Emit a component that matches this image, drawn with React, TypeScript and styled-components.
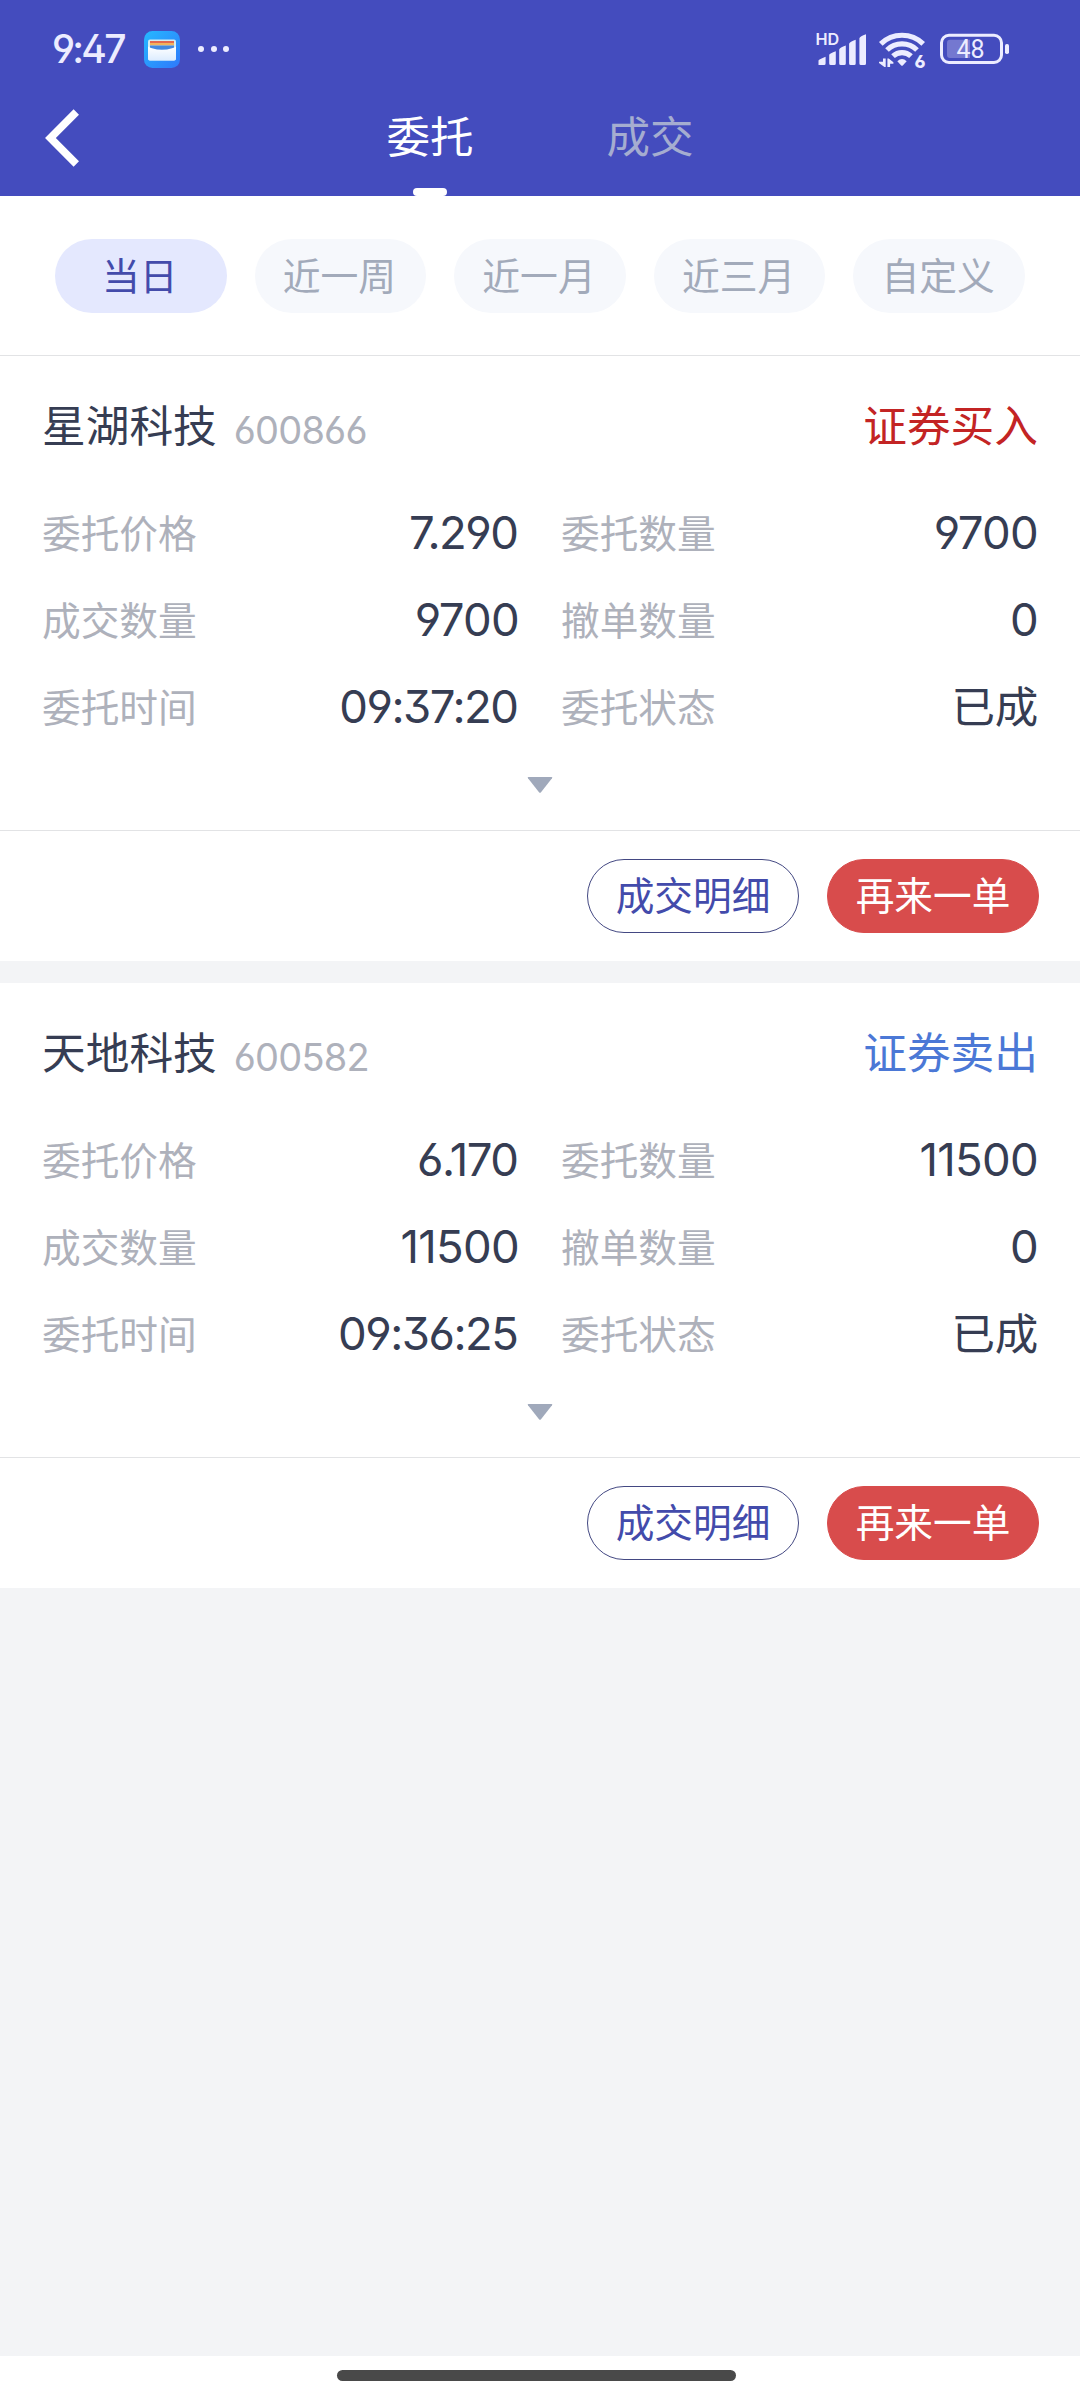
import React from 'react';
import styled, { createGlobalStyle } from 'styled-components';

const GlobalStyle = createGlobalStyle`
  * { box-sizing: border-box; }
  body {
    margin: 0;
    background: #f3f4f6;
    font-family: Inter, 'Noto Sans CJK SC', sans-serif;
    font-feature-settings: 'ss01' 1;
  }
  button {
    font: inherit;
    font-feature-settings: inherit;
    border: 0;
    padding: 0;
    background: none;
  }
`;

const Screen = styled.div`
  display: flex;
  flex-direction: column;
  width: 1080px;
  height: 2400px;
  overflow: hidden;
  background: #f3f4f6;
`;

const Header = styled.header`
  height: 196px;
  background: #444cbe;
`;

const StatusBar = styled.div`
  display: flex;
  align-items: center;
  height: 98px;
  padding: 0 70px 0 52px;
  color: #ececff;
`;

const Clock = styled.span`
  width: 92px;
  font-size: 39px;
  line-height: 40px;
  font-weight: 500;
  letter-spacing: -2.8px;
`;

const StatusIcons = styled.svg`
  display: block;
  margin-left: auto;
`;

const NavBar = styled.nav`
  display: grid;
  grid-template-columns: 320px 220px 220px 320px;
  height: 98px;
`;

const BackButton = styled.button`
  display: flex;
  align-items: flex-start;
  padding: 11px 0 0 45px;
`;

const Tab = styled.button<{ $active?: boolean }>`
  display: flex;
  flex-direction: column;
  align-items: center;
  justify-content: space-between;
  font-size: 43.5px;
  line-height: 79px;
  color: ${(p) => (p.$active ? '#ffffff' : '#a5add0')};
  &::after {
    content: '';
    width: 34px;
    height: 8px;
    border-radius: 4px;
    background: ${(p) => (p.$active ? '#ffffff' : 'transparent')};
  }
`;

const Filters = styled.div`
  display: flex;
  gap: 28px;
  height: 160px;
  padding: 43px 55px 42px;
  background: #fff;
  border-bottom: 1px solid #e2e3e5;
`;

const Chip = styled.button<{ $active?: boolean }>`
  flex: 1;
  height: 74px;
  padding-right: 2px;
  border-radius: 37px;
  font-size: 37.8px;
  line-height: 71px;
  color: ${(p) => (p.$active ? '#434bab' : '#a2aaba')};
  background: ${(p) => (p.$active ? '#e4e8fe' : '#f6f8fc')};
`;

const Orders = styled.main`
  display: flex;
  flex-direction: column;
  gap: 22px;
  flex: 1;
`;

const Card = styled.article`
  height: 605px;
  background: #fff;
`;

const CardBody = styled.div`
  height: 475px;
  padding: 37px 42px 0;
  border-bottom: 1px solid #e2e3e5;
`;

const CardTitle = styled.div`
  display: flex;
  height: 64px;
  line-height: 68px;
`;

const StockName = styled.span`
  font-size: 43.7px;
  color: #363d53;
`;

const StockCode = styled.span`
  margin-left: 17px;
  font-size: 38px;
  line-height: 74px;
  letter-spacing: -0.8px;
  color: #aeb1bb;
`;

const Side = styled.span<{ $buy: boolean }>`
  margin-left: auto;
  font-size: 43.7px;
  color: ${(p) => (p.$buy ? '#c32424' : '#4b78d6')};
`;

const Fields = styled.dl`
  display: grid;
  grid-template-columns: 1fr 1fr;
  column-gap: 42px;
  grid-auto-rows: 87px;
  margin: 33px 0 0;
`;

const Field = styled.div`
  display: flex;
  align-items: center;
  justify-content: space-between;
`;

const FieldLabel = styled.dt`
  font-size: 38.7px;
  line-height: 60px;
  color: #aeb1bb;
`;

const FieldValue = styled.dd<{ $tight?: boolean }>`
  margin: 0;
  padding: 0 ${(p) => (p.$tight ? 1.5 : 0)}px 2px 0;
  font-size: 45.5px;
  line-height: 58px;
  letter-spacing: ${(p) => (p.$tight ? -1.5 : -0.7)}px;
  color: #363d53;
`;

const StatusValue = styled(FieldValue)`
  font-size: 43.5px;
  letter-spacing: -0.2px;
`;

const Expand = styled.div`
  display: flex;
  justify-content: center;
  padding-top: 25px;
`;

const Actions = styled.div`
  display: flex;
  justify-content: flex-end;
  gap: 28px;
  padding: 28px 41px 0 0;
`;

const ActionButton = styled.button<{ $primary?: boolean }>`
  width: 212px;
  height: 74px;
  border-radius: 37px;
  font-size: 38.7px;
  line-height: 70px;
  border: 1px solid ${(p) => (p.$primary ? '#d84c4c' : '#434882')};
  color: ${(p) => (p.$primary ? '#ffffff' : '#434bab')};
  background: ${(p) => (p.$primary ? '#d84c4c' : '#ffffff')};
`;

const HomeBar = styled.footer`
  display: flex;
  justify-content: center;
  height: 44px;
  padding: 14px 7px 0 0;
  background: #fff;
  &::after {
    content: '';
    width: 399px;
    height: 10.5px;
    border-radius: 6px;
    background: #494949;
  }
`;

interface Order {
  name: string;
  code: string;
  side: string;
  buy: boolean;
  price: string;
  qty: string;
  filled: string;
  cancelled: string;
  time: string;
  status: string;
}

const orders: Order[] = [
  { name: '星湖科技', code: '600866', side: '证券买入', buy: true, price: '7.290', qty: '9700', filled: '9700', cancelled: '0', time: '09:37:20', status: '已成' },
  { name: '天地科技', code: '600582', side: '证券卖出', buy: false, price: '6.170', qty: '11500', filled: '11500', cancelled: '0', time: '09:36:25', status: '已成' },
];

const filters = ['当日', '近一周', '近一月', '近三月', '自定义'];

const WalletIcon = () => (
  <svg width="36" height="37" viewBox="0 0 36 37">
    <defs>
      <linearGradient id="walletBg" x1="0" y1="0" x2="1" y2="1">
        <stop offset="0" stopColor="#25b8ff" />
        <stop offset="1" stopColor="#2f78fb" />
      </linearGradient>
      <linearGradient id="walletFront" x1="0" y1="0" x2="0" y2="1">
        <stop offset="0" stopColor="#ffffff" />
        <stop offset="1" stopColor="#dcecff" />
      </linearGradient>
    </defs>
    <rect width="36" height="37" rx="8.5" fill="url(#walletBg)" />
    <rect x="4" y="8.5" width="28" height="21" rx="2" fill="#d3ecf2" />
    <rect x="6" y="10" width="24" height="2" fill="#e4684f" />
    <rect x="6" y="12" width="24" height="2.5" fill="#f3b35c" />
    <rect x="6" y="14.5" width="24" height="7" fill="#4488e0" />
    <path d="M4 15.5Q5 16.6 8 17.2Q18 20.4 28 17.2Q31 16.6 32 15.5V27.5a2 2 0 0 1-2 2H6a2 2 0 0 1-2-2Z" fill="url(#walletFront)" />
  </svg>
);

const MoreDots = styled.span`
  display: flex;
  gap: 6.5px;
  margin-left: 18px;
  i {
    width: 6px;
    height: 6px;
    border-radius: 50%;
    background: #ececff;
  }
`;

const BatteryLevel = styled.text`
  font-family: Roboto, sans-serif;
  font-size: 25px;
`;

const SystemIcons = () => (
  <StatusIcons width="194" height="44" viewBox="816 27 194 44" fill="#ececff">
    <text x="815.4" y="45.2" fontSize="16.2" fontWeight="600">HD</text>
    <path d="M818.5 64.9V60.5Q819 59.3 825.6 56.8V63.4a1.5 1.5 0 0 1-1.5 1.5Z" />
    <path d="M829.2 63.4V54.7Q829.8 53.4 835.8 51.2V63.4a1.5 1.5 0 0 1-1.5 1.5h-3.6a1.5 1.5 0 0 1-1.5-1.5Z" />
    <path d="M839.2 63.4V49.5Q839.8 47.6 845.8 45.6V63.4a1.5 1.5 0 0 1-1.5 1.5h-3.6a1.5 1.5 0 0 1-1.5-1.5Z" />
    <path d="M849.1 63.4V43.7Q849.8 41.6 855.7 39.7V63.4a1.5 1.5 0 0 1-1.5 1.5h-3.6a1.5 1.5 0 0 1-1.5-1.5Z" />
    <path d="M859.4 63.4V38.2Q860 36.1 866 34.2V63.4a1.5 1.5 0 0 1-1.5 1.5h-3.6a1.5 1.5 0 0 1-1.5-1.5Z" />
    <g fill="none" stroke="#ececff" strokeWidth="5.2">
      <path d="M880.8 43.8A30.5 30.5 0 0 1 923.2 43.8" />
      <path d="M887 50A21.5 21.5 0 0 1 917 50" />
      <path d="M893 56.2A13 13 0 0 1 911 56.2" />
    </g>
    <path d="M897.3 61.2Q902 57 906.7 61.2L903 65.3Q902 66.3 901 65.3Z" />
    <path d="M883 58.4h2.7V67h-1.3L879 63v-1.3h4ZM887.4 67V58.4h1.3L893.4 62.3v1.4h-3.3V67Z" />
    <text x="914.6" y="67.6" fontSize="17.5" fontWeight="800">6</text>
    <rect x="941.5" y="35.3" width="60" height="27.2" rx="7.5" fill="none" stroke="#ececff" strokeWidth="3" />
    <path d="M950 39.8H970V58H950a3 3 0 0 1-3-3V42.8a3 3 0 0 1 3-3Z" fill="#7478d0" />
    <rect x="1005" y="44" width="4" height="10" rx="1.8" />
    <BatteryLevel x="956.5" y="58">48</BatteryLevel>
  </StatusIcons>
);

const OrderCard = ({ order }: { order: Order }) => (
  <Card>
    <CardBody>
      <CardTitle>
        <StockName>{order.name}</StockName>
        <StockCode>{order.code}</StockCode>
        <Side $buy={order.buy}>{order.side}</Side>
      </CardTitle>
      <Fields>
        <Field><FieldLabel>委托价格</FieldLabel><FieldValue $tight>{order.price}</FieldValue></Field>
        <Field><FieldLabel>委托数量</FieldLabel><FieldValue>{order.qty}</FieldValue></Field>
        <Field><FieldLabel>成交数量</FieldLabel><FieldValue>{order.filled}</FieldValue></Field>
        <Field><FieldLabel>撤单数量</FieldLabel><FieldValue>{order.cancelled}</FieldValue></Field>
        <Field><FieldLabel>委托时间</FieldLabel><FieldValue $tight>{order.time}</FieldValue></Field>
        <Field><FieldLabel>委托状态</FieldLabel><StatusValue>{order.status}</StatusValue></Field>
      </Fields>
      <Expand>
        <svg width="26" height="18" viewBox="0 0 26 18">
          <path d="M1.6 1H24.4Q26 1 25 2.3L14 16.2Q13 17.4 12 16.2L1 2.3Q0 1 1.6 1Z" fill="#a0a9bb" />
        </svg>
      </Expand>
    </CardBody>
    <Actions>
      <ActionButton>成交明细</ActionButton>
      <ActionButton $primary>再来一单</ActionButton>
    </Actions>
  </Card>
);

export default function App() {
  return (
    <>
      <GlobalStyle />
      <Screen>
        <Header>
          <StatusBar>
            <Clock>9:47</Clock>
            <WalletIcon />
            <MoreDots><i /><i /><i /></MoreDots>
            <SystemIcons />
          </StatusBar>
          <NavBar>
            <BackButton aria-label="返回">
              <svg width="35" height="58" viewBox="0 0 35 58">
                <path d="M31.3 3L5.4 29L31.3 55" fill="none" stroke="#fff" strokeWidth="7.6" />
              </svg>
            </BackButton>
            <Tab $active>委托</Tab>
            <Tab>成交</Tab>
          </NavBar>
        </Header>
        <Filters>
          {filters.map((f, i) => (
            <Chip key={f} $active={i === 0}>{f}</Chip>
          ))}
        </Filters>
        <Orders>
          {orders.map((o) => (
            <OrderCard key={o.code} order={o} />
          ))}
        </Orders>
        <HomeBar />
      </Screen>
    </>
  );
}
